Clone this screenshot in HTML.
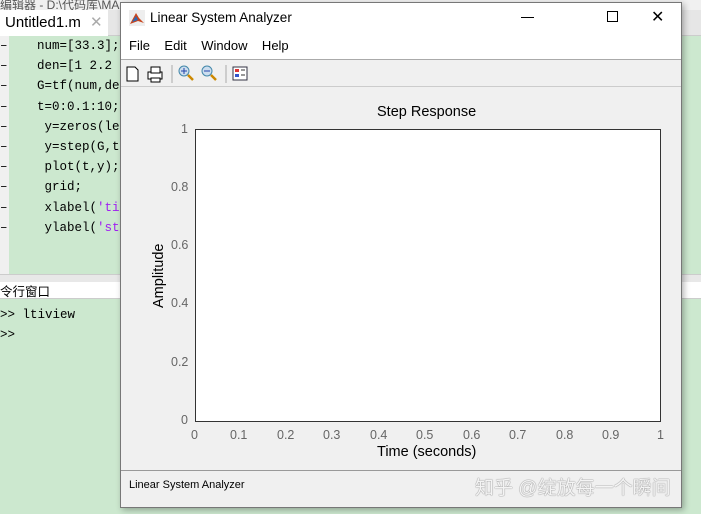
<!DOCTYPE html><html><head><style>
body{margin:0;width:701px;height:514px;overflow:hidden;background:#cce8cf;font-family:"Liberation Sans","Noto Sans CJK SC",sans-serif;position:relative}
.a{position:absolute}
.code{font-family:"Liberation Mono","Noto Sans CJK SC",monospace;font-size:12.5px;color:#000}
.s{color:#a020f0}
.t{font-size:12.5px;color:#666}
</style></head><body>
<div class="a" style="left:0;top:0;width:701px;height:10px;background:#f0f0f0"></div>
<div class="a" style="left:0;top:-4px;font-size:12px;color:#555">编辑器 - D:\代码库\MA</div>
<div class="a" style="left:0;top:10px;width:701px;height:25px;background:#e6e6e6;border-bottom:1px solid #ccc"></div>
<div class="a" style="left:0;top:10px;width:108px;height:26px;background:#fff"></div>
<div class="a" style="left:5px;top:14px;font-size:15px">Untitled1.m</div>
<div class="a" style="left:90px;top:13px;font-size:15px;color:#aaa">✕</div>
<div class="a" style="left:0;top:36px;width:9px;height:238px;background:#f0f0f0"></div>
<div class="a code" style="left:0;top:36px;line-height:20.2px;color:#000">–<br>–<br>–<br>–<br>–<br>–<br>–<br>–<br>–<br>–</div>
<div class="a code" style="left:37px;top:36px;line-height:20.2px;white-space:pre">num=[33.3];
den=[1 2.2 1
G=tf(num,den
t=0:0.1:10;
 y=zeros(len
 y=step(G,t)
 plot(t,y);
 grid;
 xlabel(<span class="s">'tim</span>
 ylabel(<span class="s">'ste</span></div>
<div class="a" style="left:0;top:274px;width:701px;height:8px;background:#e8e8e8;border-top:1px solid #ccc"></div>
<div class="a" style="left:0;top:282px;width:701px;height:16px;background:#fff;border-bottom:1px solid #ccc"></div>
<div class="a" style="left:0;top:281px;font-size:12.5px">令行窗口</div>
<div class="a code" style="left:0;top:305px;line-height:20px;white-space:pre">>> ltiview
>></div>
<div class="a" style="left:120px;top:2px;width:560px;height:504px;background:#f0f0f0;border:1px solid #777;box-shadow:2px 2px 6px rgba(0,0,0,.3)">
 <div class="a" style="left:0;top:0;width:560px;height:56px;background:#fff;border-bottom:1px solid #aaa"></div>
 <svg class="a" style="left:8px;top:7px" width="16" height="16"><rect width="16" height="16" fill="#eee"/><path d="M1 14 L7 3 L10 8 L15 13 L9 11Z" fill="#c8441c"/><path d="M3 12 L7 6 L9 10Z" fill="#2a6ab8"/></svg>
 <div class="a" style="left:29px;top:7px;font-size:13.5px">Linear System Analyzer</div>
 <div class="a" style="left:400px;top:14px;width:13px;height:1px;background:#000"></div>
 <div class="a" style="left:486px;top:8px;width:9px;height:9px;border:1px solid #000"></div>
 <div class="a" style="left:530px;top:4px;font-size:16px">✕</div>
 <div class="a" style="left:8px;top:35px;font-size:13px;word-spacing:0">File&nbsp;&nbsp;&nbsp;&nbsp;Edit&nbsp;&nbsp;&nbsp;&nbsp;Window&nbsp;&nbsp;&nbsp;&nbsp;Help</div>
 <div class="a" style="left:0;top:83px;width:560px;height:1px;background:#ccc"></div>
 <svg class="a" style="left:4px;top:60px" width="130" height="22">
  <path d="M2 4 H10 L13 7 V18 H2Z" fill="#fff" stroke="#000"/>
  <rect x="23" y="9" width="14" height="7" fill="#fff" stroke="#000"/><rect x="26" y="4" width="9" height="6" fill="#fff" stroke="#000"/><rect x="26" y="15" width="9" height="4" fill="#fff" stroke="#000"/>
  <line x1="47" y1="2" x2="47" y2="20" stroke="#aaa"/>
  <circle cx="59" cy="8" r="5" fill="#cde" stroke="#48a"/><path d="M56 8h6M59 5v6" stroke="#24a"/><path d="M63 12l5 5" stroke="#c80" stroke-width="2.5"/>
  <circle cx="82" cy="8" r="5" fill="#cde" stroke="#48a"/><path d="M79 8h6" stroke="#24a"/><path d="M86 12l5 5" stroke="#c80" stroke-width="2.5"/>
  <line x1="101" y1="2" x2="101" y2="20" stroke="#aaa"/>
  <rect x="108" y="4" width="14" height="13" fill="#fff" stroke="#334"/><rect x="110" y="6" width="4" height="3" fill="#d33"/><rect x="110" y="11" width="4" height="3" fill="#35c"/><path d="M116 7h4M116 12h4" stroke="#333"/>
 </svg>
 <div class="a" style="left:256px;top:101px;font-size:14.5px">Step Response</div>
 <div class="a" style="left:74px;top:126px;width:464px;height:291px;background:#fff;border:1px solid #333"></div>
 <div class="a" style="left:30px;top:305px;font-size:14.5px;transform:rotate(-90deg);transform-origin:0 0">Amplitude</div>
 <div class="a t" style="left:60px;top:119px">1</div>
 <div class="a t" style="left:50px;top:177px">0.8</div>
 <div class="a t" style="left:50px;top:235px">0.6</div>
 <div class="a t" style="left:50px;top:293px">0.4</div>
 <div class="a t" style="left:50px;top:352px">0.2</div>
 <div class="a t" style="left:60px;top:410px">0</div>
 <div class="a t" style="left:70px;top:425px;width:480px;height:16px">
  <span class="a" style="left:0">0</span><span class="a" style="left:39px">0.1</span><span class="a" style="left:86px">0.2</span><span class="a" style="left:132px">0.3</span><span class="a" style="left:179px">0.4</span><span class="a" style="left:225px">0.5</span><span class="a" style="left:272px">0.6</span><span class="a" style="left:318px">0.7</span><span class="a" style="left:365px">0.8</span><span class="a" style="left:411px">0.9</span><span class="a" style="left:466px">1</span></div>
 <div class="a" style="left:256px;top:441px;font-size:14.5px">Time (seconds)</div>
 <div class="a" style="left:0;top:467px;width:560px;height:1px;background:#999"></div>
 <div class="a" style="left:8px;top:476px;font-size:11px">Linear System Analyzer</div>
 <div class="a" style="left:354px;top:470px;font-size:19px;color:rgba(255,255,255,.9);text-shadow:0 0 1px #888,0 0 1px #888">知乎 @绽放每一个瞬间</div>
</div>
</body></html>
